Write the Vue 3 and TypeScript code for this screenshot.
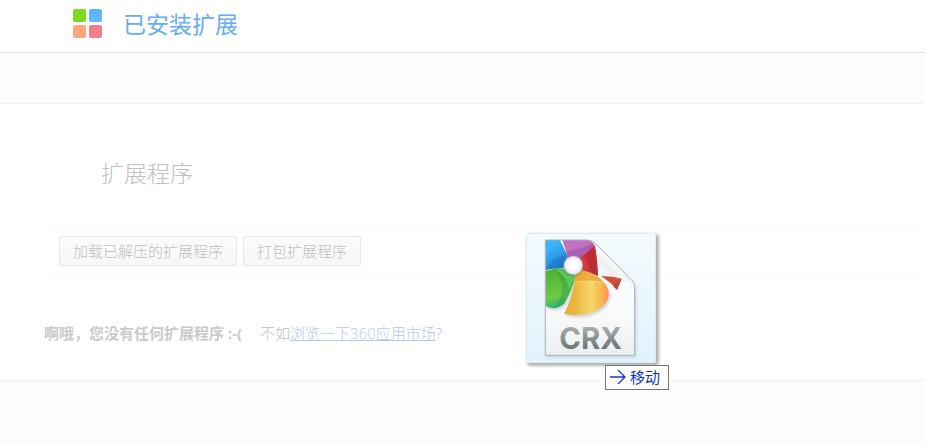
<script setup lang="ts">
import { ref } from 'vue'

const actions = ref<string[]>(['加载已解压的扩展程序', '打包扩展程序'])
</script>

<template>
  <div class="page">
    <header class="header">
      <svg class="logo" viewBox="0 0 29 29" aria-hidden="true">
        <rect width="13" height="13" rx="2" fill="#7cdb20" />
        <rect x="16" width="13" height="13" rx="2" fill="#62b5ff" />
        <rect y="16" width="13" height="13" rx="2" fill="#ffa77b" />
        <rect x="16" y="16" width="13" height="13" rx="2" fill="#f27f8a" />
      </svg>
      <h1 class="brand">已安装扩展</h1>
    </header>
    <div class="band"></div>
    <main class="content">
      <h2 class="title">扩展程序</h2>
      <div class="toolbar">
        <button v-for="label in actions" :key="label" type="button" class="action">{{ label }}</button>
      </div>
      <p class="empty">
        <strong>啊哦，您没有任何扩展程序 :-(</strong>
        <span>不如<a href="#">浏览一下360应用市场</a>?</span>
      </p>
    </main>

    <div class="drag">
      <svg class="tile" viewBox="36 27 384 384" role="img" aria-label="CRX">
        <defs>
          <linearGradient id="paper" x1="0" y1="0" x2="0" y2="1">
            <stop offset="0" stop-color="#fff" />
            <stop offset=".65" stop-color="#f8fafb" />
            <stop offset="1" stop-color="#eceff1" />
          </linearGradient>
          <linearGradient id="blue" x1="0" y1="0" x2=".5" y2="1">
            <stop offset=".3" stop-color="#36b4fc" />
            <stop offset="1" stop-color="#237dcc" />
          </linearGradient>
          <linearGradient id="green" x1="0" y1="0" x2=".2" y2="1">
            <stop offset="0" stop-color="#4dac35" />
            <stop offset=".75" stop-color="#6acb42" />
            <stop offset="1" stop-color="#32b47d" />
          </linearGradient>
          <linearGradient id="yellow">
            <stop offset="0" stop-color="#e9ad35" />
            <stop offset=".25" stop-color="#e9b540" />
            <stop offset=".6" stop-color="#f7d667" />
            <stop offset=".82" stop-color="#f4bb50" />
            <stop offset="1" stop-color="#ff8d55" />
          </linearGradient>
          <linearGradient id="red">
            <stop offset="0" stop-color="#d94644" />
            <stop offset=".65" stop-color="#cc3035" />
            <stop offset="1" stop-color="#b94145" />
          </linearGradient>
          <linearGradient id="fold" x1="0" y1="1" x2="1" y2="0">
            <stop offset=".15" stop-color="#fff" />
            <stop offset=".38" stop-color="#eceeef" />
            <stop offset=".5" stop-color="#fafafa" />
          </linearGradient>
          <linearGradient id="letters" x1="0" y1="0" x2="0" y2="1">
            <stop offset=".1" stop-color="#b0b4b6" />
            <stop offset=".85" stop-color="#6b7073" />
          </linearGradient>
          <radialGradient id="hub">
            <stop offset=".4" stop-color="#fff" />
            <stop offset=".8" stop-color="#edeff1" />
            <stop offset="1" stop-color="#b2bac4" />
          </radialGradient>
          <filter id="soft" x="-20%" y="-20%" width="150%" height="150%">
            <feDropShadow dx="4" dy="6" stdDeviation="4" flood-color="#596b78" flood-opacity=".28" />
          </filter>
          <clipPath id="sheet"><path d="M91 45H218Q232 46 242 56L352 168Q359 175 359 188V391H91Z" /></clipPath>
        </defs>
        <path d="M91 45H218Q232 46 242 56L352 168Q359 175 359 188V391H91Z" fill="url(#paper)" filter="url(#soft)" />
        <g clip-path="url(#sheet)">
          <path d="M91 135V45H135L160 98L144 130Q118 129 91 135Z" fill="url(#blue)" />
          <path d="M91 135Q112 95 151 91L144 130Q118 129 91 135Z" fill="#1768af" opacity=".35" />
          <path d="M142 45H218Q229 46 240 62L194 105L159 99Z" fill="#c071c2" />
          <path d="M154 80Q195 74 234 54L240 62L194 105L159 99Z" fill="#a254aa" opacity=".6" />
          <path d="M240 62Q249 104 249 153L196 134L191 101Z" fill="url(#red)" />
          <path d="M201 96Q220 82 240 62Q249 104 249 153L229 144Q222 111 201 96Z" fill="#a52031" opacity=".35" />
          <g filter="url(#soft)">
            <path d="M91 138Q119 129 148 131L181 150Q173 193 148 235Q122 259 91 243Z" fill="url(#green)" />
            <path d="M123 136L148 131L181 150Q173 193 148 235Q136 248 116 251Q162 194 123 136Z" fill="#269846" opacity=".4" />
            <path d="M123 136L148 131L181 150L163 193Q155 152 123 136Z" fill="#71df6e" opacity=".55" />
          </g>
          <g filter="url(#soft)">
            <path d="M182 148L193 136Q233 139 256 162Q284 184 281 211Q276 252 215 267Q181 273 147 266Q172 223 182 148Z" fill="url(#yellow)" />
            <path d="M182 148L193 136Q233 139 268 173Q222 163 178 172Z" fill="#e6a12d" opacity=".7" />
            <path d="M178 172Q222 163 268 173" fill="none" stroke="#fae18c" stroke-width="2" />
          </g>
          <path d="M240 60Q248 102 250 154Q299 151 359 184V174L242 54Z" fill="url(#fold)" />
          <path d="M258 154Q290 153 320 161L306 195Q288 172 258 154Z" fill="#cf5039" />
          <path d="M293 184L320 161L306 195Z" fill="#b8372f" opacity=".5" />
          <circle cx="175" cy="125" r="31" fill="#343f51" opacity=".18" />
          <circle cx="175" cy="121" r="29" fill="url(#hub)" />
        </g>
        <path d="M91 45H218Q232 46 242 56L352 168Q359 175 359 188V391H91Z" fill="none" stroke="#a8b1b7" stroke-width="3" />
        <text x="133" y="371" class="crx" fill="url(#letters)">CRX</text>
      </svg>
      <div class="tip">
        <svg class="arrow" viewBox="0 0 16 14" aria-hidden="true">
          <path d="M0 7H15M8 0L15 7L8 14" fill="none" stroke="#1237d2" stroke-width="1.3" />
        </svg>
        <span>移动</span>
      </div>
    </div>
  </div>
</template>

<style>
body {
  margin: 0;
  background: #fcfcfc;
}
</style>

<style scoped>
.page {
  position: relative;
  min-height: 100vh;
  background: #fcfcfc;
  font-family: "Open Sans", "Noto Sans CJK SC", sans-serif;
  font-size: 15px;
  font-weight: 300;
  line-height: 20px;
  color: #c0c0c0;
}

.header {
  display: flex;
  align-items: center;
  gap: 21px;
  height: 52px;
  padding-left: 73px;
  background: #fff;
  border-bottom: 1px solid #dcdcdc;
}

.logo {
  width: 29px;
  height: 29px;
  margin-bottom: 5px;
}

.brand {
  margin: 0 0 5px;
  font-size: 23px;
  font-weight: 400;
  line-height: 30px;
  color: #66acfb;
}

.band {
  height: 50px;
  border-bottom: 1px solid #f0f0f0;
}

.content {
  padding: 53px 0 37px 44px;
  background: #fff;
  border-bottom: 1px solid #f0f0f0;
}

.title {
  margin: 0 0 36px 57px;
  font-size: 23px;
  font-weight: 300;
  line-height: 32px;
}

.toolbar {
  display: flex;
  flex-wrap: wrap;
  gap: 6px;
  padding: 10px 15px 11px;
  border-top: 1px solid #fafafa;
  border-bottom: 1px solid #fafafa;
}

.action {
  height: 30px;
  padding: 0 13px;
  font: inherit;
  color: #c0c0c0;
  background: linear-gradient(#fbfbfb, #f7f7f7);
  border: 1px solid #e8e8e8;
  border-radius: 2px;
}

.empty {
  display: flex;
  gap: 18px;
  margin: 45px 0 0;
}

.empty strong {
  font-weight: 700;
  color: #cacaca;
}

.empty a {
  color: #b4c8f0;
}

.drag {
  position: absolute;
  top: 233px;
  left: 526px;
}

.tile {
  display: block;
  box-sizing: border-box;
  width: 130px;
  height: 130px;
  background: linear-gradient(rgba(243, 250, 254, 0.9), rgba(224, 242, 252, 0.95));
  border: 1px solid #d5eefb;
  border-radius: 3px;
  box-shadow: 2px 2px 3px 1px rgba(0, 0, 0, 0.3);
}

.crx {
  font-family: Inter, "Liberation Sans", sans-serif;
  font-size: 88px;
  font-weight: 700;
}

.tip {
  position: absolute;
  top: 132px;
  left: 79px;
  display: flex;
  align-items: center;
  gap: 4px;
  padding: 1px 8px 2px 4px;
  font-weight: 400;
  white-space: nowrap;
  color: #0c32cf;
  background: #fff;
  border: 1px solid #767676;
}

.arrow {
  width: 16px;
  height: 14px;
}
</style>
